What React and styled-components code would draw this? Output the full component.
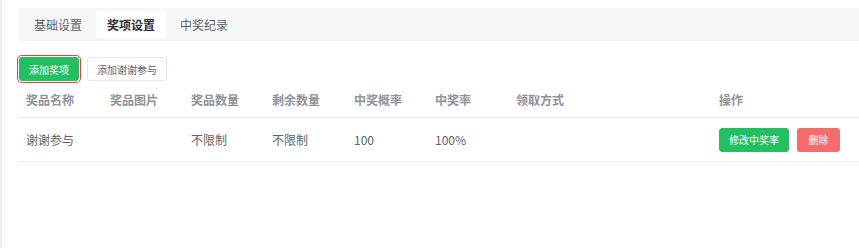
import styled, { createGlobalStyle } from "styled-components";

const GlobalStyle = createGlobalStyle`
  html, body {
    margin: 0;
    padding: 0;
    background: #ffffff;
  }
  body {
    font-family: "Noto Sans CJK SC", "Noto Sans", sans-serif;
  }
`;

const Page = styled.div`
  min-height: 248px;
  box-sizing: border-box;
  border-left: 2px solid #f1f1f3;
  padding: 8px 0 0 16px;
`;

const TabBar = styled.div`
  display: flex;
  align-items: center;
  gap: 3px;
  height: 33px;
  box-sizing: border-box;
  padding: 3px 5px;
  background: #f5f6f8;
  border-radius: 3px 0 0 3px;
`;

const Tab = styled.div`
  display: flex;
  align-items: center;
  height: 27px;
  padding: 0 11px;
  font-size: 12px;
  border-radius: 2px;
  color: ${({ $active }) => ($active ? "#303133" : "#606266")};
  font-weight: ${({ $active }) => ($active ? 700 : 400)};
  background: ${({ $active }) => ($active ? "#ffffff" : "transparent")};
`;

const Toolbar = styled.div`
  display: flex;
  align-items: center;
  gap: 8px;
  margin-top: 16px;
  padding-left: 1px;
`;

const Button = styled.button`
  height: 24px;
  padding: 0 9px;
  min-width: ${({ $min }) => $min || 0}px;
  box-sizing: border-box;
  font-family: inherit;
  font-size: 10px;
  border-radius: 3px;
  cursor: pointer;
  outline: none;
  border: 1px solid
    ${({ $variant }) =>
      $variant === "primary" ? "#25bf63" : $variant === "danger" ? "#f56c6c" : "#e4e7ed"};
  background: ${({ $variant }) =>
    $variant === "primary" ? "#25bf63" : $variant === "danger" ? "#f56c6c" : "#ffffff"};
  color: ${({ $variant }) => ($variant === "plain" ? "#606266" : "#ffffff")};
  box-shadow: ${({ $focused }) =>
    $focused ? "0 0 0 1px #ffffff, 0 0 0 2px #e8413c" : "none"};
`;

const Row = styled.div`
  display: grid;
  grid-template-columns: 84px 81px 81px 82px 81px 81px 203px 1fr;
  align-items: center;
  height: ${({ $head }) => ($head ? 37 : 44)}px;
  box-sizing: border-box;
  border-bottom: 1px solid #ebeef5;
`;

const Cell = styled.div`
  display: flex;
  align-items: center;
  gap: 8px;
  padding-left: 8px;
  font-size: 12px;
  color: ${({ $head }) => ($head ? "#909399" : "#606266")};
  font-weight: ${({ $head }) => ($head ? 600 : 400)};
  white-space: nowrap;
`;

const columns = ["奖品名称", "奖品图片", "奖品数量", "剩余数量", "中奖概率", "中奖率", "领取方式", "操作"];

const rows = [
  { name: "谢谢参与", image: "", total: "不限制", left: "不限制", chance: "100", rate: "100%", way: "" },
];

export default function App() {
  return (
    <>
      <GlobalStyle />
      <Page>
        <TabBar>
          <Tab>基础设置</Tab>
          <Tab $active>奖项设置</Tab>
          <Tab>中奖纪录</Tab>
        </TabBar>

        <Toolbar>
          <Button $variant="primary" $focused>添加奖项</Button>
          <Button $variant="plain">添加谢谢参与</Button>
        </Toolbar>

        <Row $head>
          {columns.map((c) => (
            <Cell $head key={c}>{c}</Cell>
          ))}
        </Row>

        {rows.map((r) => (
          <Row key={r.name}>
            <Cell>{r.name}</Cell>
            <Cell>{r.image}</Cell>
            <Cell>{r.total}</Cell>
            <Cell>{r.left}</Cell>
            <Cell>{r.chance}</Cell>
            <Cell>{r.rate}</Cell>
            <Cell>{r.way}</Cell>
            <Cell>
              <Button $variant="primary">修改中奖率</Button>
              <Button $variant="danger" $min={43}>删除</Button>
            </Cell>
          </Row>
        ))}
      </Page>
    </>
  );
}
